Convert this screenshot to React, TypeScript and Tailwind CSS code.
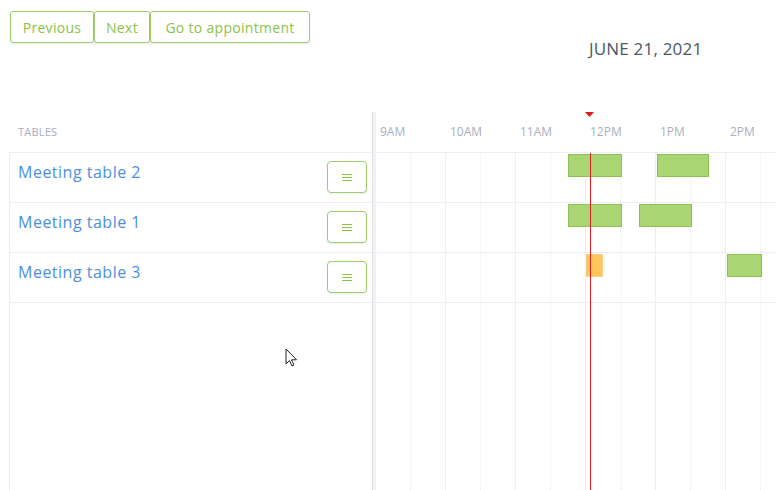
import React from "react";

type Booking = { left: number; width: number; kind: "ok" | "pending" };

const hours = ["9AM", "10AM", "11AM", "12PM", "1PM", "2PM"];

const tables: { name: string; bookings: Booking[] }[] = [
    {
        name: "Meeting table 2",
        bookings: [
            { left: 192, width: 54, kind: "ok" },
            { left: 281, width: 52, kind: "ok" },
        ],
    },
    {
        name: "Meeting table 1",
        bookings: [
            { left: 192, width: 54, kind: "ok" },
            { left: 263, width: 53, kind: "ok" },
        ],
    },
    {
        name: "Meeting table 3",
        bookings: [
            { left: 210, width: 17, kind: "pending" },
            { left: 351, width: 35, kind: "ok" },
        ],
    },
];

const navButtons = [
    { label: "Previous", w: "w-[84px]" },
    { label: "Next", w: "w-[56px]" },
    { label: "Go to appointment", w: "w-[160px]" },
];

function MenuIcon() {
    return (
        <svg width="10" height="8" viewBox="0 0 10 8" className="text-[#8bc34a]">
            <path d="M0 1.5h10M0 4.5h10M0 7.5h10" stroke="currentColor" strokeWidth="1" />
        </svg>
    );
}

export default function App() {
    return (
        <div className="relative h-[490px] w-[776px] overflow-hidden bg-white font-['Open_Sans',sans-serif]">
            {/* toolbar */}
            <div className="flex h-[112px] items-start pl-[10px] pt-[11px]">
                <div className="flex">
                    {navButtons.map((b) => (
                        <button
                            key={b.label}
                            className={`${b.w} h-[32px] rounded-[3px] border border-[#9fcd6e] bg-white text-[14px] tracking-[0.3px] text-[#8bc34a] shadow-[0_1px_2px_rgba(120,130,200,0.15)]`}
                        >
                            {b.label}
                        </button>
                    ))}
                </div>
                <div className="ml-[279px] mt-[25px] text-[17px] tracking-[0.2px] text-[#4b5866]">JUNE 21, 2021</div>
            </div>

            {/* scheduler */}
            <div className="flex h-[378px] pl-[9px]">
                {/* tables column */}
                <div className="flex w-[363px] flex-col">
                    <div className="flex h-[40px] items-center pl-[9px] text-[11px] uppercase tracking-[0.2px] text-[#a9adbf]">Tables</div>
                    <div className="flex flex-1 flex-col border-l border-t border-[#eceef3]">
                        {tables.map((t) => (
                            <div key={t.name} className="flex h-[50px] justify-between border-b border-[#eceef3] pl-[8px] pr-[5px]">
                                <span className="pt-[7px] text-[16px] leading-[24px] tracking-[0.5px] text-[#4a8fe0]">{t.name}</span>
                                <button className="mt-[8px] flex h-[32px] w-[40px] items-center justify-center rounded-[4px] border border-[#9fcd6e] bg-white shadow-[0_1px_2px_rgba(120,130,200,0.15)]">
                                    <MenuIcon />
                                </button>
                            </div>
                        ))}
                    </div>
                </div>

                {/* divider */}
                <div className="w-[4px] border-l border-[#dfe1e8] bg-[#f0f1f4]" />

                {/* timeline */}
                <div className="relative flex flex-1 flex-col overflow-hidden">
                    <div className="flex h-[40px] items-center">
                        {hours.map((h) => (
                            <div key={h} className="w-[70px] shrink-0 pl-[4px] text-[12px] text-[#a9afbd]">
                                {h}
                            </div>
                        ))}
                    </div>
                    <div className="relative flex-1 border-t border-[#eceef3]">
                        <div className="absolute inset-0 flex">
                            {hours.map((h) => (
                                <div key={h} className="flex w-[70px] shrink-0 border-r border-[#eceef3]">
                                    <div className="w-[35px] border-r border-dotted border-[#eceef1]" />
                                </div>
                            ))}
                        </div>
                        {tables.map((t) => (
                            <div key={t.name} className="relative h-[50px] border-b border-[#eceef3]">
                                {t.bookings.map((b, i) => (
                                    <div
                                        key={i}
                                        className={
                                            b.kind === "ok"
                                                ? "absolute top-[1px] h-[23px] border border-[#8cc152] bg-[#a9d673]"
                                                : "absolute top-[1px] h-[23px] border border-[#f8cc85] bg-[#ffc658]"
                                        }
                                        style={{ left: b.left, width: b.width }}
                                    />
                                ))}
                            </div>
                        ))}
                        <div className="absolute bottom-0 left-[214px] top-0 w-[1px] bg-[#d92020]" />
                    </div>
                    <svg width="9" height="5" viewBox="0 0 9 5" className="absolute left-[209px] top-[0px]">
                        <path d="M0 0h9L4.5 5z" fill="#e21b1b" />
                    </svg>
                </div>
            </div>

            {/* mouse pointer */}
            <svg width="14" height="20" viewBox="0 0 14 20" className="absolute left-[285px] top-[348px]">
                <path d="M1 1v15l3.5-3.5 2.5 5.5 2-1-2.5-5.2h5z" fill="white" stroke="#222" strokeWidth="1" strokeLinejoin="round" />
            </svg>
        </div>
    );
}
